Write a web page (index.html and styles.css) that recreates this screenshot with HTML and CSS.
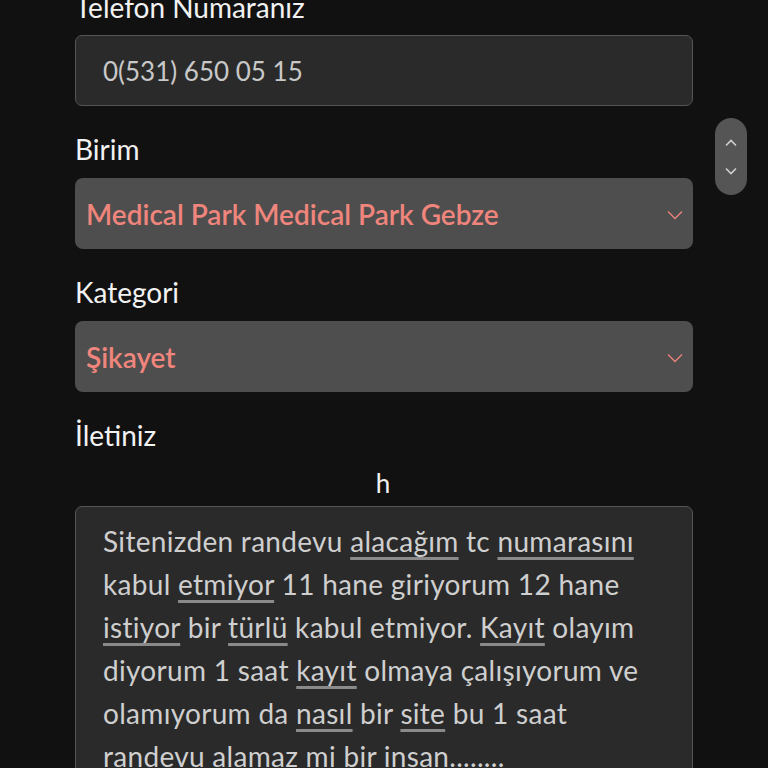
FILE: index.html
```html
<!DOCTYPE html>
<html lang="tr">
<head>
  <meta charset="UTF-8">
  <meta name="viewport" content="width=device-width, initial-scale=1.0">
  <title>İletişim Formu</title>
  <link rel="stylesheet" href="styles.css">
</head>
<body>
  <div class="form-container">
    <label class="field-label first">Telefon Numaranız</label>
    <div class="text-input">0(531) 650 05 15</div>

    <label class="field-label">Birim</label>
    <div class="select-box">
      <span>Medical Park Medical Park Gebze</span>
      <svg class="chevron" width="16" height="10" viewBox="0 0 16 10"><path d="M1 1.5 L8 8.5 L15 1.5" fill="none" stroke="#e8837a" stroke-width="1.4"/></svg>
    </div>

    <label class="field-label">Kategori</label>
    <div class="select-box">
      <span>Şikayet</span>
      <svg class="chevron" width="16" height="10" viewBox="0 0 16 10"><path d="M1 1.5 L8 8.5 L15 1.5" fill="none" stroke="#e8837a" stroke-width="1.4"/></svg>
    </div>

    <label class="field-label">İletiniz</label>
    <p class="stray">h</p>
    <div class="text-area">
      Sitenizden randevu <span class="spell">alacağım</span> tc <span class="spell">numarasını</span><br>
      kabul <span class="spell">etmiyor</span> 11 hane giriyorum 12 hane<br>
      <span class="spell">istiyor</span> bir <span class="spell">türlü</span> kabul etmiyor. <span class="spell">Kayıt</span> olayım<br>
      diyorum 1 saat <span class="spell">kayıt</span> olmaya çalışıyorum ve<br>
      olamıyorum da <span class="spell">nasıl</span> bir <span class="spell">site</span> bu 1 saat<br>
      randevu alamaz mi bir insan........
    </div>
  </div>

  <!-- bouton flottant haut/bas -->
  <div class="scroll-nav">
    <svg width="12" height="8" viewBox="0 0 12 8"><path d="M1 6.5 L6 1.5 L11 6.5" fill="none" stroke="#cfcfcf" stroke-width="1.6"/></svg>
    <svg width="12" height="8" viewBox="0 0 12 8"><path d="M1 1.5 L6 6.5 L11 1.5" fill="none" stroke="#cfcfcf" stroke-width="1.6"/></svg>
  </div>
</body>
</html>
```

FILE: styles.css
```css
body {
  font-family: 'Lato', 'Noto Sans', sans-serif;
  background-color: #111111;
  color: #f2f2f2;
  margin: 0;
  padding: 0;
  height: 768px;
  overflow: hidden;
}
.form-container {
  width: 618px;
  margin: -10px 0 0 75px;
  display: flex;
  flex-direction: column;
}
.field-label {
  font-size: 28px;
  line-height: 34px;
  margin: 26px 0 12px;
  color: #f2f2f2;
}
.field-label.first {
  margin-top: 0;
  margin-bottom: 11px;
}
.text-input {
  height: 69px;
  border: 1px solid #555;
  border-radius: 7px;
  background-color: #2a2a2a;
  color: #c8c8c8;
  font-size: 26px;
  display: flex;
  align-items: center;
  padding-left: 27px;
}
.select-box {
  height: 71px;
  border-radius: 8px;
  background-color: #4e4e4e;
  color: #ef857c;
  font-size: 28px;
  font-weight: 600;
  display: flex;
  align-items: center;
  justify-content: space-between;
  padding: 0 10px 0 11px;
}
.chevron {
  margin-top: 2px;
}
.stray {
  margin: 0;
  text-align: center;
  font-size: 26px;
  line-height: 32px;
  margin-top: 3px;
  margin-bottom: 7px;
  padding-right: 2px;
}
.text-area {
  border: 1px solid #555;
  border-radius: 7px;
  background-color: #2a2a2a;
  color: #cfcfcf;
  font-size: 28px;
  letter-spacing: 0.3px;
  line-height: 43px;
  padding: 13px 20px 20px 27px;
  height: 300px;
  white-space: nowrap;
}
.spell {
  text-decoration: underline;
  text-decoration-color: #8a8a8a;
  text-decoration-thickness: 3px;
  text-underline-offset: 5px;
}
.scroll-nav {
  position: absolute;
  left: 715px;
  top: 118px;
  width: 32px;
  height: 77px;
  border-radius: 16px;
  background-color: #555;
  display: flex;
  flex-direction: column;
  align-items: center;
  justify-content: center;
  gap: 20px;
}
```
